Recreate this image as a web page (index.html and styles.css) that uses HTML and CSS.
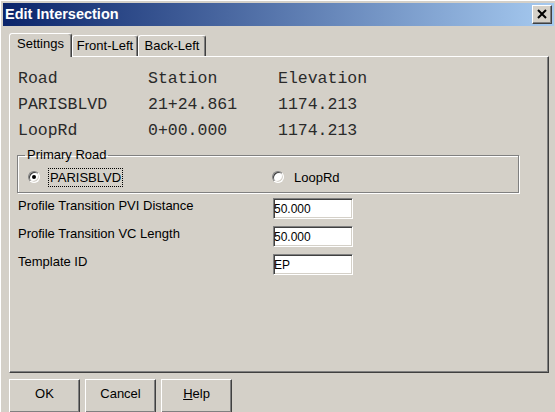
FILE: index.html
```html
<!DOCTYPE html>
<html>
<head>
<meta charset="utf-8">
<link rel="stylesheet" href="styles.css">
</head>
<body>
<div class="window">
  <div class="titlebar">
    <span class="title">Edit Intersection</span>
    <div class="close">
      <svg width="18" height="17" viewBox="0 0 18 17"><path d="M5 4 L13 12 M13 4 L5 12" stroke="#000" stroke-width="2" fill="none"/></svg>
    </div>
  </div>
  <div class="content">
    <div class="tabstrip">
      <div class="tab tab-active t1">Settings</div>
      <div class="tab t2">Front-Left</div>
      <div class="tab t3">Back-Left</div>
    </div>
    <div class="panel">
      <div class="table">
        <span>Road</span><span>Station</span><span>Elevation</span>
        <span>PARISBLVD</span><span>21+24.861</span><span>1174.213</span>
        <span>LoopRd</span><span>0+00.000</span><span>1174.213</span>
      </div>
      <fieldset class="group">
        <legend>Primary Road</legend>
        <div class="radios">
          <div class="ritem"><span class="radio checked"></span><span class="rlabel focus">PARISBLVD</span></div>
          <div class="ritem"><span class="radio"></span><span class="rlabel">LoopRd</span></div>
        </div>
      </fieldset>
      <div class="form">
        <label class="flabel">Profile Transition PVI Distance</label>
        <input class="field" type="text" value="50.000">
        <label class="flabel">Profile Transition VC Length</label>
        <input class="field" type="text" value="50.000">
        <label class="flabel">Template ID</label>
        <input class="field" type="text" value="EP">
      </div>
    </div>
    <div class="buttons">
      <div class="btn">OK</div>
      <div class="btn">Cancel</div>
      <div class="btn"><u>H</u>elp</div>
    </div>
  </div>
</div>
</body>
</html>
```
FILE: styles.css
```css
html, body {
  margin: 0;
  padding: 0;
  height: 412px;
  overflow: hidden;
  background: #d4d0c8;
}
body {
  font-family: "Liberation Sans", Arial, sans-serif;
  font-size: 13px;
  color: #000;
}
.window {
  padding: 3px 1px 0 3px;
  box-shadow: inset 1px 1px 0 #fff;
  height: 412px;
  box-sizing: border-box;
}
.titlebar {
  height: 23px;
  background: linear-gradient(to right, #0a246a, #a6caf0);
  display: flex;
  align-items: center;
  justify-content: space-between;
}
.title {
  color: #fff;
  font-weight: bold;
  font-size: 14.5px;
  padding-left: 2px;
  line-height: 23px;
}
.close {
  width: 20px;
  height: 19px;
  box-sizing: border-box;
  margin-right: 2px;
  background: #d4d0c8;
  border: 1px solid;
  border-color: #fff #404040 #404040 #fff;
  box-shadow: inset -1px -1px 0 #808080;
  display: flex;
}
.content {
  padding-left: 6px;
}
.tabstrip {
  display: flex;
  align-items: flex-end;
  margin-top: 7px;
  height: 23px;
}
.tab {
  box-sizing: border-box;
  height: 21px;
  border: 1px solid;
  border-bottom: none;
  border-color: #fff #404040 transparent #fff;
  border-radius: 3px 3px 0 0;
  box-shadow: inset -1px 0 0 #808080;
  text-align: center;
  line-height: 16px;
  padding-top: 2px;
  background: #d4d0c8;
}
.tab-active {
  height: 24px;
  margin-bottom: -1px;
  position: relative;
  z-index: 1;
  padding-top: 2px;
}
.t1 { width: 63px; }
.t2 { width: 66px; }
.t3 { width: 68px; }
.panel {
  width: 540px;
  height: 317px;
  box-sizing: border-box;
  border: 1px solid;
  border-color: #fff #404040 #404040 #fff;
  box-shadow: inset -1px -1px 0 #808080;
  padding: 8px 0 0 7px;
}
.table {
  display: grid;
  grid-template-columns: 130px 130px auto;
  grid-auto-rows: 26px;
  align-items: center;
  margin-left: 1px;
  font-family: "Liberation Mono", "Courier New", monospace;
  font-size: 16.5px;
  color: #2a2a2a;
}
.group {
  margin: 5px 0 0 0;
  width: 502px;
  box-sizing: border-box;
  border: 1px solid #808080;
  box-shadow: 1px 1px 0 #fff, inset 1px 1px 0 #fff;
  padding: 5px 0 5px 6px;
}
.group legend {
  padding: 0 2px;
  line-height: 14px;
  margin-left: 1px;
}
.radios {
  display: grid;
  grid-template-columns: 244px auto;
  margin-left: 4px;
}
.ritem {
  display: flex;
  align-items: center;
  height: 20px;
}
.radio {
  width: 12px;
  height: 12px;
  box-sizing: border-box;
  border-radius: 50%;
  background: #fff;
  border: 1px solid;
  border-color: #808080 #fff #fff #808080;
  box-shadow: inset 1px 1px 0 #404040, inset -1px -1px 0 #d4d0c8;
  display: flex;
  align-items: center;
  justify-content: center;
  flex: none;
}
.radio.checked::after {
  content: "";
  width: 4px;
  height: 4px;
  border-radius: 50%;
  background: #000;
}
.rlabel {
  margin-left: 8px;
  padding: 0 1px;
  border: 1px dotted transparent;
  line-height: 17px;
}
.rlabel.focus {
  border-color: #000;
}
.form {
  display: grid;
  grid-template-columns: 255px 80px;
  grid-auto-rows: 21px;
  row-gap: 7px;
  margin: 5px 0 0 1px;
}
.flabel {
  align-self: start;
  line-height: 16px;
}
.field {
  width: 80px;
  height: 21px;
  box-sizing: border-box;
  margin: 0;
  padding: 0;
  border: 1px solid;
  border-color: #808080 #fff #fff #808080;
  box-shadow: inset 1px 1px 0 #404040, inset -1px -1px 0 #d4d0c8;
  background: #fff;
  font-family: "Liberation Sans", Arial, sans-serif;
  font-size: 12px;
  color: #000;
  outline: none;
}
.buttons {
  display: flex;
  gap: 5px;
  margin-top: 6px;
}
.btn {
  width: 71px;
  height: 34px;
  box-sizing: border-box;
  border: 1px solid;
  border-color: #fff #404040 #404040 #fff;
  box-shadow: inset -1px -1px 0 #808080;
  text-align: center;
  line-height: 16px;
  padding-top: 6px;
}
```
